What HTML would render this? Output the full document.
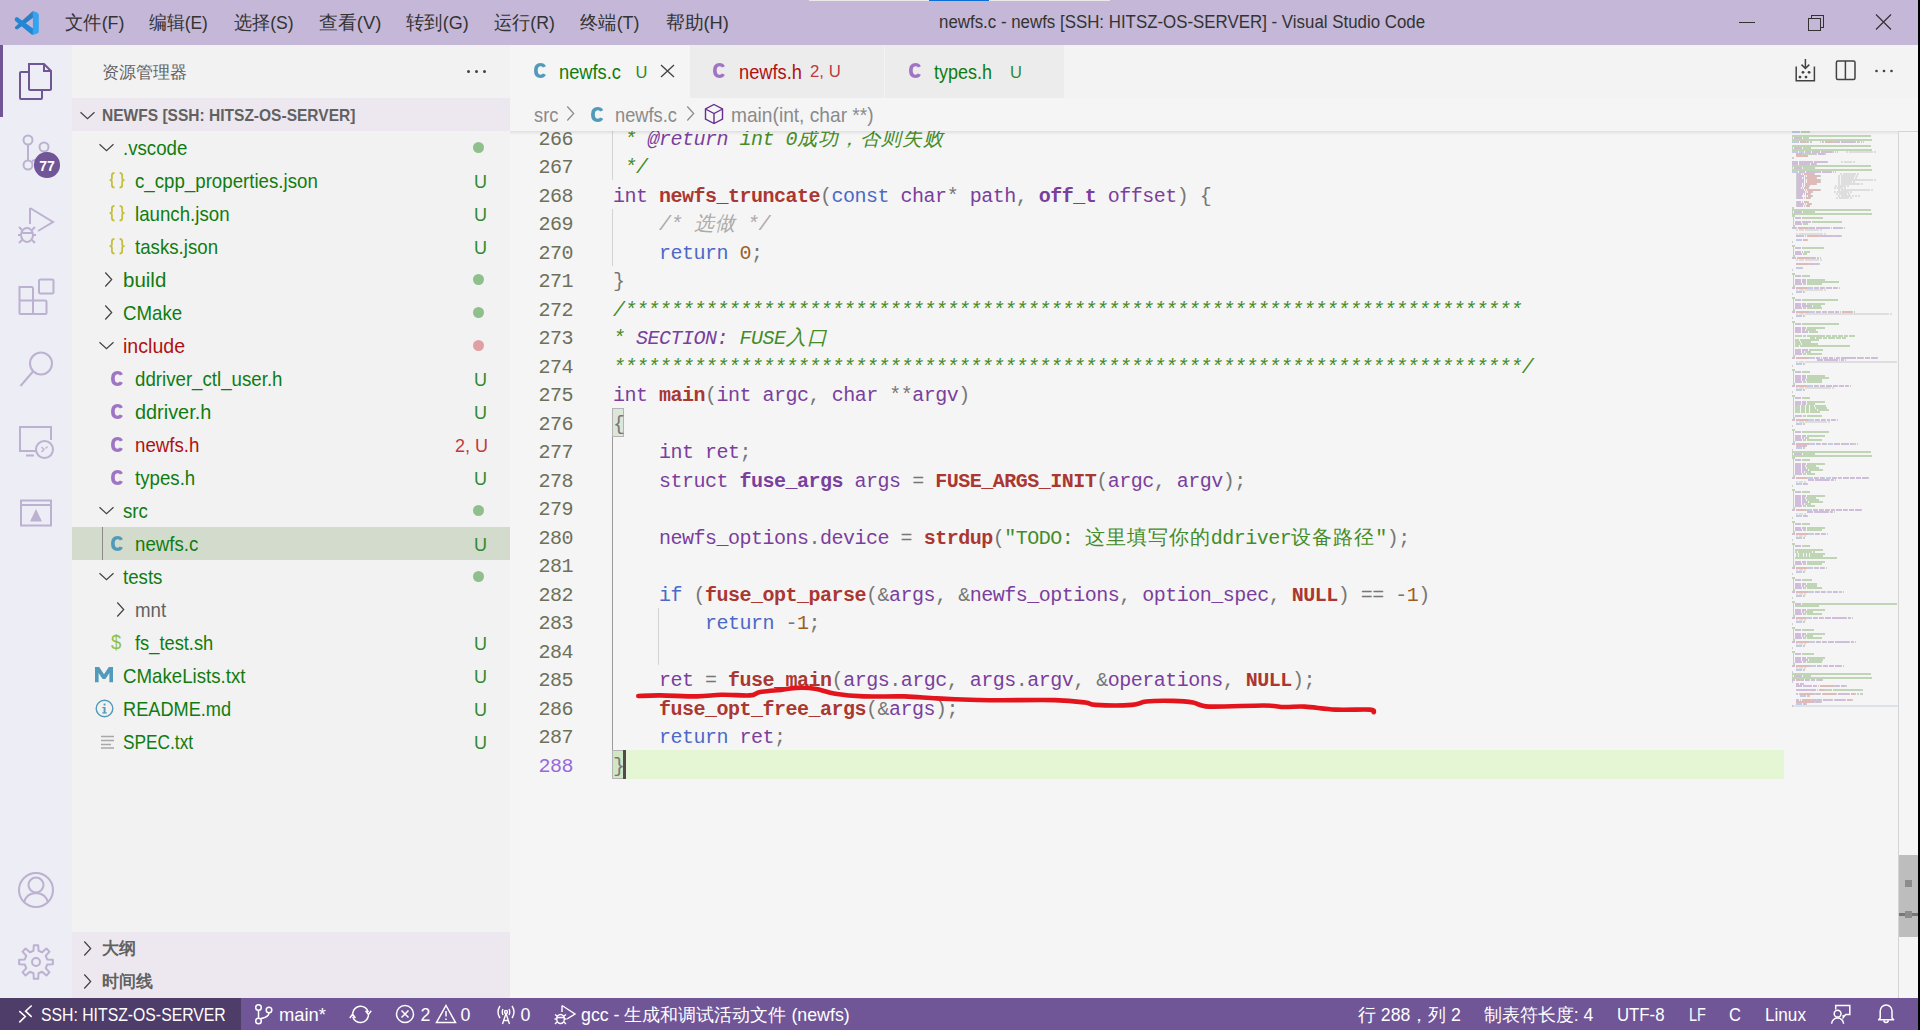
<!DOCTYPE html>
<html><head><meta charset="utf-8"><title>newfs.c - Visual Studio Code</title>
<style>
*{margin:0;padding:0;box-sizing:border-box}
html,body{width:1920px;height:1030px;overflow:hidden}
body{position:relative;font-family:"Liberation Sans",sans-serif;background:#f5f5f5;color:#333}
.a{position:absolute}
.t{position:absolute;white-space:pre;line-height:1}
.menu{top:13.5px;font-size:18.5px;color:#333}
.fn{position:absolute;white-space:pre;line-height:1;font-size:18.7px}
.g{color:#007100}.r{color:#b01011}.gr{color:#616161}
.ub{position:absolute;font-size:18px;line-height:1;white-space:pre}
.cl{position:absolute;left:613px;height:28.5px;white-space:pre;font-family:"Liberation Mono",monospace;font-size:20px;letter-spacing:-0.5px;line-height:28.5px;color:#777}
.cl span.z{letter-spacing:1px}
.ln{position:absolute;left:520px;width:53px;text-align:right;font-family:"Liberation Mono",monospace;font-size:20px;letter-spacing:-0.5px;line-height:28.5px;color:#6d705b;white-space:pre}
.kw{color:#4b69c6}.st{color:#7a3e9d}.fnc{color:#aa3731;font-weight:bold}.v{color:#7a3e9d}.tb{color:#7a3e9d;font-weight:bold}
.num{color:#9c5d27}.str{color:#448c27}.cm{color:#448c27;font-style:italic}.cmt{color:#7a3e9d;font-style:italic}.cg{color:#aaa;font-style:italic}.op{color:#777}
.sb{position:absolute;top:1006px;font-size:17.7px;line-height:1;color:#fff;white-space:pre}
</style></head><body>
<div class="a" style="left:0;top:0;width:1920px;height:45px;background:#c4b7d7"></div>
<svg class="a" style="left:0;top:0" width="45" height="45">
<polygon points="32.9,11.1 33,17.7 17.3,29.4 15.5,29.1 14.8,27.6 15.5,26.4" fill="#2c7fc3"/>
<polygon points="15.5,17.6 17.2,17.1 33,28.6 32.9,34.9 31.2,34.3 15,20.8 14.7,19.1" fill="#1f88d8"/>
<polygon points="32.9,11.1 37.2,12.6 38.8,14.4 38.8,32.2 37.2,33.6 32.9,34.9" fill="#34a4f1"/>
</svg>
<span class="t" style="left:64.7px;top:13.84px;font-size:18.5px;font-weight:normal;color:#333;transform:scaleX(0.9640);transform-origin:0 0;">文件(F)</span>
<span class="t" style="left:149.4px;top:13.84px;font-size:18.5px;font-weight:normal;color:#333;transform:scaleX(0.9382);transform-origin:0 0;">编辑(E)</span>
<span class="t" style="left:233.9px;top:13.84px;font-size:18.5px;font-weight:normal;color:#333;transform:scaleX(0.9510);transform-origin:0 0;">选择(S)</span>
<span class="t" style="left:318.6px;top:13.84px;font-size:18.5px;font-weight:normal;color:#333;transform:scaleX(0.9957);transform-origin:0 0;">查看(V)</span>
<span class="t" style="left:405.7px;top:13.84px;font-size:18.5px;font-weight:normal;color:#333;transform:scaleX(0.9703);transform-origin:0 0;">转到(G)</span>
<span class="t" style="left:494.4px;top:13.84px;font-size:18.5px;font-weight:normal;color:#333;transform:scaleX(0.9546);transform-origin:0 0;">运行(R)</span>
<span class="t" style="left:580.3px;top:13.84px;font-size:18.5px;font-weight:normal;color:#333;transform:scaleX(0.9640);transform-origin:0 0;">终端(T)</span>
<span class="t" style="left:666px;top:13.84px;font-size:18.5px;font-weight:normal;color:#333;transform:scaleX(0.9876);transform-origin:0 0;">帮助(H)</span>
<span class="t" style="left:939.4px;top:14.20px;font-size:17.6px;font-weight:normal;color:#333;transform:scaleX(0.9591);transform-origin:0 0;">newfs.c - newfs [SSH: HITSZ-OS-SERVER] - Visual Studio Code</span>
<div class="a" style="left:1739px;top:22px;width:16px;height:1px;background:#333"></div>
<div class="a" style="left:1811px;top:15px;width:13px;height:13px;border:1px solid #333"></div>
<div class="a" style="left:1808px;top:18px;width:13px;height:13px;border:1px solid #333;background:#c4b7d7"></div>
<svg class="a" style="left:1875px;top:14px" width="17" height="16"><path d="M1 0.5 L16 15.5 M16 0.5 L1 15.5" stroke="#333" stroke-width="1.2"/></svg>
<div class="a" style="left:809px;top:0;width:301px;height:1.2px;background:#e9e9e7"></div>
<div class="a" style="left:929px;top:0;width:60px;height:1.2px;background:#0a6fd6"></div>
<div class="a" style="left:0;top:45px;width:72px;height:953px;background:#ededf5"></div>
<div class="a" style="left:0;top:45px;width:3px;height:72px;background:#705697"></div>
<svg class="a" style="left:0;top:45px" width="72" height="953" viewBox="0 45 72 953" fill="none" stroke-width="2">
<!-- explorer -->
<path d="M29 64 H44 L51 71 V89 Q51 90 50 90 H30 Q29 90 29 89 Z" stroke="#705697"/>
<path d="M44 64 V71 H51" stroke="#705697"/>
<path d="M29 72 H21 Q20 72 20 73 V98 Q20 99 21 99 H41 Q42 99 42 98 V90" stroke="#705697"/>
<!-- scm -->
<circle cx="28" cy="140" r="4.5" stroke="#bcb1d0"/>
<circle cx="44" cy="147" r="4.5" stroke="#bcb1d0"/>
<circle cx="28" cy="165" r="4.5" stroke="#bcb1d0"/>
<path d="M28 144.5 V160.5 M44 151.5 Q44 158 32 161" stroke="#bcb1d0"/>
<!-- debug -->
<path d="M30 208 V224 M30 208 L53 222 L38 231" stroke="#bcb1d0"/>
<ellipse cx="27" cy="235" rx="6" ry="7" stroke="#bcb1d0"/>
<path d="M21 233 H33 M18 235 H21 M33 235 H36 M19 227 L22 230 M35 227 L32 230 M19 243 L22 240 M35 243 L32 240" stroke="#bcb1d0"/>
<!-- extensions -->
<rect x="39" y="279.5" width="14.5" height="14" rx="1.5" stroke="#bcb1d0"/>
<path d="M19.5 287 H31.5 Q33 287 33 288.5 V300.5 H45 Q46.5 300.5 46.5 302 V313 Q46.5 314 45.5 314 H20.5 Q19.5 314 19.5 313 Z M19.5 300.5 H33 V314" stroke="#bcb1d0"/>
<!-- search -->
<circle cx="41" cy="363.5" r="11" stroke="#bcb1d0"/>
<path d="M33 371.5 L20.5 386" stroke="#bcb1d0"/>
<!-- remote explorer -->
<path d="M36 451 H20 V427 H51 V440" stroke="#bcb1d0"/>
<path d="M26 455.5 H34" stroke="#bcb1d0"/>
<circle cx="44.5" cy="449.5" r="8.5" stroke="#bcb1d0"/>
<path d="M41.5 447 L44 449.5 L41.5 452 M47.5 446.5 L45.5 448.5" stroke="#bcb1d0" stroke-width="1.3"/>
<!-- azure-like -->
<rect x="21" y="500.5" width="30" height="25" stroke="#bcb1d0"/>
<path d="M21 505 H51" stroke="#bcb1d0"/>
<path d="M36 509 L30 521.5 H42 Z" fill="#bcb1d0" stroke="none"/>
<!-- account -->
<circle cx="36" cy="890" r="17" stroke="#bcb1d0"/>
<circle cx="36" cy="885" r="7.5" stroke="#bcb1d0"/>
<path d="M24 902.5 Q26 893.5 36 893 Q46 893.5 48 902.5" stroke="#bcb1d0"/>
</svg>
<svg class="a" style="left:0;top:0" width="72" height="1000" fill="none" stroke-width="2"><polygon points="47.22,959.49 52.86,959.80 52.86,964.20 47.22,964.51 45.71,968.16 49.48,972.36 46.36,975.48 42.16,971.71 38.51,973.22 38.20,978.86 33.80,978.86 33.49,973.22 29.84,971.71 25.64,975.48 22.52,972.36 26.29,968.16 24.78,964.51 19.14,964.20 19.14,959.80 24.78,959.49 26.29,955.84 22.52,951.64 25.64,948.52 29.84,952.29 33.49,950.78 33.80,945.14 38.20,945.14 38.51,950.78 42.16,952.29 46.36,948.52 49.48,951.64 45.71,955.84" stroke="#bcb1d0" stroke-linejoin="round"/><circle cx="36" cy="962" r="4" stroke="#bcb1d0"/></svg>
<div class="a" style="left:34.2px;top:152.3px;width:25.6px;height:25.6px;border-radius:50%;background:#705697"></div>
<span class="t" style="left:37px;top:159px;width:20px;text-align:center;font-size:14px;font-weight:bold;color:#fff">77</span>
<div class="a" style="left:72px;top:45px;width:438px;height:953px;background:#f2f2f2"></div>
<span class="t" style="left:102px;top:64.5px;font-size:16.6px;color:#616161">资源管理器</span>
<div class="a" style="left:467px;top:70px;width:3px;height:3px;border-radius:50%;background:#424242"></div>
<div class="a" style="left:475px;top:70px;width:3px;height:3px;border-radius:50%;background:#424242"></div>
<div class="a" style="left:483px;top:70px;width:3px;height:3px;border-radius:50%;background:#424242"></div>
<div class="a" style="left:72px;top:98px;width:438px;height:33px;background:#ede8ef"></div>
<svg class="a" style="left:79px;top:110px" width="18" height="12"><path d="M1.5 2.3 L8.5 8.7 L15.5 2.3" fill="none" stroke="#424242" stroke-width="1.2"/></svg>
<span class="t" style="left:102px;top:106.86px;font-size:17.3px;font-weight:bold;color:#616161;transform:scaleX(0.8988);transform-origin:0 0;">NEWFS [SSH: HITSZ-OS-SERVER]</span>
<div class="a" style="left:72px;top:527px;width:438px;height:33px;background:#d3dbcd"></div>
<div class="a" style="left:102px;top:527px;width:1px;height:33px;background:#8a8a8a"></div>
<svg class="a" style="left:98px;top:142px" width="18" height="12"><path d="M1.5 2.3 L8.5 8.7 L15.5 2.3" fill="none" stroke="#424242" stroke-width="1.2"/></svg>
<span class="t" style="left:122.9px;top:137.82px;font-size:20.3px;font-weight:normal;color:#107c10;transform:scaleX(0.9212);transform-origin:0 0;">.vscode</span>
<div class="a" style="left:473px;top:142px;width:11px;height:11px;border-radius:50%;background:#8fbf8c"></div>
<svg class="a" style="left:108.5px;top:172.3px" width="17" height="17" fill="none" stroke="#c6bf3c" stroke-width="1.8"><path d="M5.5 0.9 Q2.9 0.9 2.9 3.5 V6.6 Q2.9 8.15 0.6 8.15 Q2.9 8.15 2.9 9.7 V12.9 Q2.9 15.5 5.5 15.5 M10.6 0.9 Q13.2 0.9 13.2 3.5 V6.6 Q13.2 8.15 15.5 8.15 Q13.2 8.15 13.2 9.7 V12.9 Q13.2 15.5 10.6 15.5"/></svg>
<span class="t" style="left:134.6px;top:170.82px;font-size:20.3px;font-weight:normal;color:#107c10;transform:scaleX(0.9212);transform-origin:0 0;">c_cpp_properties.json</span>
<span class="ub" style="left:474px;top:173px;color:#2f8a2f">U</span>
<svg class="a" style="left:108.5px;top:205.3px" width="17" height="17" fill="none" stroke="#c6bf3c" stroke-width="1.8"><path d="M5.5 0.9 Q2.9 0.9 2.9 3.5 V6.6 Q2.9 8.15 0.6 8.15 Q2.9 8.15 2.9 9.7 V12.9 Q2.9 15.5 5.5 15.5 M10.6 0.9 Q13.2 0.9 13.2 3.5 V6.6 Q13.2 8.15 15.5 8.15 Q13.2 8.15 13.2 9.7 V12.9 Q13.2 15.5 10.6 15.5"/></svg>
<span class="t" style="left:134.6px;top:203.82px;font-size:20.3px;font-weight:normal;color:#107c10;transform:scaleX(0.9212);transform-origin:0 0;">launch.json</span>
<span class="ub" style="left:474px;top:206px;color:#2f8a2f">U</span>
<svg class="a" style="left:108.5px;top:238.3px" width="17" height="17" fill="none" stroke="#c6bf3c" stroke-width="1.8"><path d="M5.5 0.9 Q2.9 0.9 2.9 3.5 V6.6 Q2.9 8.15 0.6 8.15 Q2.9 8.15 2.9 9.7 V12.9 Q2.9 15.5 5.5 15.5 M10.6 0.9 Q13.2 0.9 13.2 3.5 V6.6 Q13.2 8.15 15.5 8.15 Q13.2 8.15 13.2 9.7 V12.9 Q13.2 15.5 10.6 15.5"/></svg>
<span class="t" style="left:134.6px;top:236.82px;font-size:20.3px;font-weight:normal;color:#107c10;transform:scaleX(0.9212);transform-origin:0 0;">tasks.json</span>
<span class="ub" style="left:474px;top:239px;color:#2f8a2f">U</span>
<svg class="a" style="left:103px;top:271px" width="12" height="18"><path d="M2.3 1.5 L8.7 8.5 L2.3 15.5" fill="none" stroke="#424242" stroke-width="1.2"/></svg>
<span class="t" style="left:122.9px;top:269.82px;font-size:20.3px;font-weight:normal;color:#107c10;transform:scaleX(1.0099);transform-origin:0 0;">build</span>
<div class="a" style="left:473px;top:274px;width:11px;height:11px;border-radius:50%;background:#8fbf8c"></div>
<svg class="a" style="left:103px;top:304px" width="12" height="18"><path d="M2.3 1.5 L8.7 8.5 L2.3 15.5" fill="none" stroke="#424242" stroke-width="1.2"/></svg>
<span class="t" style="left:122.9px;top:302.82px;font-size:20.3px;font-weight:normal;color:#107c10;transform:scaleX(0.9212);transform-origin:0 0;">CMake</span>
<div class="a" style="left:473px;top:307px;width:11px;height:11px;border-radius:50%;background:#8fbf8c"></div>
<svg class="a" style="left:98px;top:340px" width="18" height="12"><path d="M1.5 2.3 L8.5 8.7 L15.5 2.3" fill="none" stroke="#424242" stroke-width="1.2"/></svg>
<span class="t" style="left:122.9px;top:335.82px;font-size:20.3px;font-weight:normal;color:#b01011;transform:scaleX(0.9655);transform-origin:0 0;">include</span>
<div class="a" style="left:473px;top:340px;width:11px;height:11px;border-radius:50%;background:#e0a0a3"></div>
<svg class="a" style="left:110.8px;top:371px;transform:scale(1,1);transform-origin:0 0" width="13" height="16"><path d="M11.9 3.2 Q10.2 0 6.6 0 Q0 0 0 7.5 Q0 15 6.6 15 Q10.2 15 11.9 11.8 L8.9 10.6 Q8.2 11.7 6.8 11.7 Q3.7 11.7 3.7 7.5 Q3.7 3.3 6.8 3.3 Q8.2 3.3 8.9 4.4 Z" fill="#a074c4"/></svg>
<span class="t" style="left:134.6px;top:368.82px;font-size:20.3px;font-weight:normal;color:#107c10;transform:scaleX(0.9212);transform-origin:0 0;">ddriver_ctl_user.h</span>
<span class="ub" style="left:474px;top:371px;color:#2f8a2f">U</span>
<svg class="a" style="left:110.8px;top:404px;transform:scale(1,1);transform-origin:0 0" width="13" height="16"><path d="M11.9 3.2 Q10.2 0 6.6 0 Q0 0 0 7.5 Q0 15 6.6 15 Q10.2 15 11.9 11.8 L8.9 10.6 Q8.2 11.7 6.8 11.7 Q3.7 11.7 3.7 7.5 Q3.7 3.3 6.8 3.3 Q8.2 3.3 8.9 4.4 Z" fill="#a074c4"/></svg>
<span class="t" style="left:134.6px;top:401.82px;font-size:20.3px;font-weight:normal;color:#107c10;transform:scaleX(0.9803);transform-origin:0 0;">ddriver.h</span>
<span class="ub" style="left:474px;top:404px;color:#2f8a2f">U</span>
<svg class="a" style="left:110.8px;top:437px;transform:scale(1,1);transform-origin:0 0" width="13" height="16"><path d="M11.9 3.2 Q10.2 0 6.6 0 Q0 0 0 7.5 Q0 15 6.6 15 Q10.2 15 11.9 11.8 L8.9 10.6 Q8.2 11.7 6.8 11.7 Q3.7 11.7 3.7 7.5 Q3.7 3.3 6.8 3.3 Q8.2 3.3 8.9 4.4 Z" fill="#a074c4"/></svg>
<span class="t" style="left:134.6px;top:434.82px;font-size:20.3px;font-weight:normal;color:#b01011;transform:scaleX(0.9212);transform-origin:0 0;">newfs.h</span>
<span class="ub" style="left:455px;top:437px;color:#c0393f">2, U</span>
<svg class="a" style="left:110.8px;top:470px;transform:scale(1,1);transform-origin:0 0" width="13" height="16"><path d="M11.9 3.2 Q10.2 0 6.6 0 Q0 0 0 7.5 Q0 15 6.6 15 Q10.2 15 11.9 11.8 L8.9 10.6 Q8.2 11.7 6.8 11.7 Q3.7 11.7 3.7 7.5 Q3.7 3.3 6.8 3.3 Q8.2 3.3 8.9 4.4 Z" fill="#a074c4"/></svg>
<span class="t" style="left:134.6px;top:467.82px;font-size:20.3px;font-weight:normal;color:#107c10;transform:scaleX(0.9212);transform-origin:0 0;">types.h</span>
<span class="ub" style="left:474px;top:470px;color:#2f8a2f">U</span>
<svg class="a" style="left:98px;top:505px" width="18" height="12"><path d="M1.5 2.3 L8.5 8.7 L15.5 2.3" fill="none" stroke="#424242" stroke-width="1.2"/></svg>
<span class="t" style="left:122.9px;top:500.82px;font-size:20.3px;font-weight:normal;color:#107c10;transform:scaleX(0.9212);transform-origin:0 0;">src</span>
<div class="a" style="left:473px;top:505px;width:11px;height:11px;border-radius:50%;background:#8fbf8c"></div>
<svg class="a" style="left:110.8px;top:536px;transform:scale(1,1);transform-origin:0 0" width="13" height="16"><path d="M11.9 3.2 Q10.2 0 6.6 0 Q0 0 0 7.5 Q0 15 6.6 15 Q10.2 15 11.9 11.8 L8.9 10.6 Q8.2 11.7 6.8 11.7 Q3.7 11.7 3.7 7.5 Q3.7 3.3 6.8 3.3 Q8.2 3.3 8.9 4.4 Z" fill="#519aba"/></svg>
<span class="t" style="left:134.6px;top:533.82px;font-size:20.3px;font-weight:normal;color:#107c10;transform:scaleX(0.9212);transform-origin:0 0;">newfs.c</span>
<span class="ub" style="left:474px;top:536px;color:#2f8a2f">U</span>
<svg class="a" style="left:98px;top:571px" width="18" height="12"><path d="M1.5 2.3 L8.5 8.7 L15.5 2.3" fill="none" stroke="#424242" stroke-width="1.2"/></svg>
<span class="t" style="left:122.9px;top:566.82px;font-size:20.3px;font-weight:normal;color:#107c10;transform:scaleX(0.9212);transform-origin:0 0;">tests</span>
<div class="a" style="left:473px;top:571px;width:11px;height:11px;border-radius:50%;background:#8fbf8c"></div>
<svg class="a" style="left:115px;top:601px" width="12" height="18"><path d="M2.3 1.5 L8.7 8.5 L2.3 15.5" fill="none" stroke="#424242" stroke-width="1.2"/></svg>
<span class="t" style="left:134.6px;top:599.82px;font-size:20.3px;font-weight:normal;color:#616161;transform:scaleX(0.9212);transform-origin:0 0;">mnt</span>
<span class="t" style="left:111.2px;top:633.49px;font-size:19.5px;font-weight:normal;color:#8dc149;transform:scaleX(0.9487);transform-origin:0 0;">$</span>
<span class="t" style="left:134.6px;top:632.82px;font-size:20.3px;font-weight:normal;color:#107c10;transform:scaleX(0.9015);transform-origin:0 0;">fs_test.sh</span>
<span class="ub" style="left:474px;top:635px;color:#2f8a2f">U</span>
<svg class="a" style="left:95.3px;top:667.3px" width="19" height="16"><path d="M0 15.3 V0 H4.2 L9 7.2 L13.8 0 H18 V15.3 H14.4 V6 L10.4 12 H7.6 L3.6 6 V15.3 Z" fill="#519aba"/></svg>
<span class="t" style="left:122.9px;top:665.82px;font-size:20.3px;font-weight:normal;color:#107c10;transform:scaleX(0.9212);transform-origin:0 0;">CMakeLists.txt</span>
<span class="ub" style="left:474px;top:668px;color:#2f8a2f">U</span>
<svg class="a" style="left:95px;top:699px" width="19" height="19"><circle cx="9.5" cy="9.5" r="8.3" fill="none" stroke="#519aba" stroke-width="1.4"/><rect x="8.6" y="8" width="1.9" height="6.2" fill="#519aba"/><rect x="8.6" y="4.6" width="1.9" height="1.9" fill="#519aba"/><rect x="7.3" y="13.3" width="4.5" height="1.2" fill="#519aba"/><rect x="7.3" y="8" width="2" height="1.1" fill="#519aba"/></svg>
<span class="t" style="left:122.9px;top:698.82px;font-size:20.3px;font-weight:normal;color:#107c10;transform:scaleX(0.8966);transform-origin:0 0;">README.md</span>
<span class="ub" style="left:474px;top:701px;color:#2f8a2f">U</span>
<svg class="a" style="left:100px;top:735px" width="15" height="14"><path d="M1 1.5 H14 M1 5.5 H14 M1 9.5 H11 M1 13 H14" stroke="#a8a8a8" stroke-width="1.6"/></svg>
<span class="t" style="left:122.9px;top:731.82px;font-size:20.3px;font-weight:normal;color:#107c10;transform:scaleX(0.8522);transform-origin:0 0;">SPEC.txt</span>
<span class="ub" style="left:474px;top:734px;color:#2f8a2f">U</span>
<div class="a" style="left:72px;top:932px;width:438px;height:66px;background:#ede8ef"></div>
<svg class="a" style="left:82px;top:940px" width="12" height="18"><path d="M2.3 1.5 L8.7 8.5 L2.3 15.5" fill="none" stroke="#424242" stroke-width="1.2"/></svg>
<svg class="a" style="left:82px;top:973px" width="12" height="18"><path d="M2.3 1.5 L8.7 8.5 L2.3 15.5" fill="none" stroke="#424242" stroke-width="1.2"/></svg>
<span class="t" style="left:102px;top:940px;font-size:16.5px;font-weight:bold;color:#616161">大纲</span>
<span class="t" style="left:102px;top:973px;font-size:16.5px;font-weight:bold;color:#616161">时间线</span>
<div class="a" style="left:510px;top:45px;width:1410px;height:53px;background:#f3f3f3"></div>
<div class="a" style="left:510px;top:45px;width:180px;height:53px;background:#f5f5f5"></div>
<div class="a" style="left:690px;top:45px;width:194px;height:53px;background:#ececec"></div>
<div class="a" style="left:884px;top:45px;width:180px;height:53px;background:#ececec;border-left:1px solid #f3f3f3"></div>
<svg class="a" style="left:533.75px;top:63px;transform:scale(1,1);transform-origin:0 0" width="13" height="16"><path d="M11.9 3.2 Q10.2 0 6.6 0 Q0 0 0 7.5 Q0 15 6.6 15 Q10.2 15 11.9 11.8 L8.9 10.6 Q8.2 11.7 6.8 11.7 Q3.7 11.7 3.7 7.5 Q3.7 3.3 6.8 3.3 Q8.2 3.3 8.9 4.4 Z" fill="#519aba"/></svg>
<span class="t" style="left:559px;top:61.57px;font-size:20.3px;font-weight:normal;color:#107c10;transform:scaleX(0.9015);transform-origin:0 0;">newfs.c</span>
<span class="t" style="left:635.6px;top:64.03px;font-size:16.5px;font-weight:normal;color:#2f8a2f;transform:scaleX(1.0000);transform-origin:0 0;">U</span>
<svg class="a" style="left:660px;top:64px" width="15" height="14"><path d="M1 1 L14 13 M14 1 L1 13" stroke="#424242" stroke-width="1.3"/></svg>
<svg class="a" style="left:713px;top:63px;transform:scale(1,1);transform-origin:0 0" width="13" height="16"><path d="M11.9 3.2 Q10.2 0 6.6 0 Q0 0 0 7.5 Q0 15 6.6 15 Q10.2 15 11.9 11.8 L8.9 10.6 Q8.2 11.7 6.8 11.7 Q3.7 11.7 3.7 7.5 Q3.7 3.3 6.8 3.3 Q8.2 3.3 8.9 4.4 Z" fill="#a074c4"/></svg>
<span class="t" style="left:738.7px;top:61.57px;font-size:20.3px;font-weight:normal;color:#b01011;transform:scaleX(0.9015);transform-origin:0 0;">newfs.h</span>
<span class="t" style="left:810px;top:63.78px;font-size:16.8px;font-weight:normal;color:#c0393f;transform:scaleX(1.0000);transform-origin:0 0;">2, U</span>
<svg class="a" style="left:908.5px;top:63px;transform:scale(1,1);transform-origin:0 0" width="13" height="16"><path d="M11.9 3.2 Q10.2 0 6.6 0 Q0 0 0 7.5 Q0 15 6.6 15 Q10.2 15 11.9 11.8 L8.9 10.6 Q8.2 11.7 6.8 11.7 Q3.7 11.7 3.7 7.5 Q3.7 3.3 6.8 3.3 Q8.2 3.3 8.9 4.4 Z" fill="#a074c4"/></svg>
<span class="t" style="left:933.6px;top:61.57px;font-size:20.3px;font-weight:normal;color:#107c10;transform:scaleX(0.8867);transform-origin:0 0;">types.h</span>
<span class="t" style="left:1010px;top:64.03px;font-size:16.5px;font-weight:normal;color:#2f8a2f;transform:scaleX(1.0000);transform-origin:0 0;">U</span>
<svg class="a" style="left:1790px;top:55px" width="110" height="32" fill="none" stroke="#424242" stroke-width="1.5">
<path d="M6.2 11.6 V25.8 H24.4 V11.6"/><path d="M15.4 4.1 V13.3 M11.5 9.6 L15.4 13.5 L19.3 9.6"/>
<circle cx="13" cy="17.3" r="1.4" fill="#424242" stroke="none"/><circle cx="19.1" cy="17.3" r="1.4" fill="#424242" stroke="none"/><circle cx="10" cy="22.1" r="1.4" fill="#424242" stroke="none"/><circle cx="16" cy="22.1" r="1.4" fill="#424242" stroke="none"/>
<rect x="46.4" y="6" width="18.6" height="18.6" rx="1.5"/><path d="M55.4 6 V24.6"/>
<circle cx="86.5" cy="16" r="1.3" fill="#424242" stroke="none"/><circle cx="94" cy="16" r="1.3" fill="#424242" stroke="none"/><circle cx="101.5" cy="16" r="1.3" fill="#424242" stroke="none"/>
</svg>
<div class="a" style="left:613px;top:750px;width:1171px;height:28.5px;background:#e4f6d4"></div>
<div class="a" style="left:612.0px;top:123.0px;width:1px;height:57.0px;background:#d3d3d3"></div>
<div class="a" style="left:612.0px;top:208.5px;width:1px;height:57.0px;background:#d3d3d3"></div>
<div class="a" style="left:612.0px;top:436.5px;width:1px;height:313.5px;background:#9a9a9a"></div>
<div class="a" style="left:658.0px;top:607.5px;width:1px;height:57.0px;background:#d3d3d3"></div>
<div class="a" style="left:612px;top:408.0px;width:12px;height:28.5px;background:#dee6da;border:1px solid #b4b4b4"></div>
<div class="a" style="left:612px;top:750.0px;width:12px;height:28.5px;background:#d0e7c6;border:1px solid #b4b4b4"></div>
<div class="ln" style="top:125.5px">266</div>
<div class="cl" style="top:125.5px"><span class="cm"> * </span><span class="cmt">@return</span><span class="cm"> int 0</span><span class="cm z">成功，否则失败</span></div>
<div class="ln" style="top:154.0px">267</div>
<div class="cl" style="top:154.0px"><span class="cm"> */</span></div>
<div class="ln" style="top:182.5px">268</div>
<div class="cl" style="top:182.5px"><span class="st">int</span> <span class="fnc">newfs_truncate</span><span class="op">(</span><span class="kw">const</span> <span class="st">char</span><span class="op">*</span> <span class="v">path</span><span class="op">,</span> <span class="tb">off_t</span> <span class="v">offset</span><span class="op">) {</span></div>
<div class="ln" style="top:211.0px">269</div>
<div class="cl" style="top:211.0px">    <span class="cg">/* </span><span class="cg z">选做</span><span class="cg"> */</span></div>
<div class="ln" style="top:239.5px">270</div>
<div class="cl" style="top:239.5px">    <span class="kw">return</span> <span class="num">0</span><span class="op">;</span></div>
<div class="ln" style="top:268.0px">271</div>
<div class="cl" style="top:268.0px"><span class="op">}</span></div>
<div class="ln" style="top:296.5px">272</div>
<div class="cl" style="top:296.5px"><span class="cm">/******************************************************************************</span></div>
<div class="ln" style="top:325.0px">273</div>
<div class="cl" style="top:325.0px"><span class="cm">* </span><span class="cmt">SECTION:</span><span class="cm"> FUSE</span><span class="cm z">入口</span></div>
<div class="ln" style="top:353.5px">274</div>
<div class="cl" style="top:353.5px"><span class="cm">*******************************************************************************/</span></div>
<div class="ln" style="top:382.0px">275</div>
<div class="cl" style="top:382.0px"><span class="st">int</span> <span class="fnc">main</span><span class="op">(</span><span class="st">int</span> <span class="v">argc</span><span class="op">,</span> <span class="st">char</span> <span class="op">**</span><span class="v">argv</span><span class="op">)</span></div>
<div class="ln" style="top:410.5px">276</div>
<div class="cl" style="top:410.5px"><span class="op">{</span></div>
<div class="ln" style="top:439.0px">277</div>
<div class="cl" style="top:439.0px">    <span class="st">int</span> <span class="v">ret</span><span class="op">;</span></div>
<div class="ln" style="top:467.5px">278</div>
<div class="cl" style="top:467.5px">    <span class="st">struct</span> <span class="tb">fuse_args</span> <span class="v">args</span> <span class="op">=</span> <span class="fnc">FUSE_ARGS_INIT</span><span class="op">(</span><span class="v">argc</span><span class="op">,</span> <span class="v">argv</span><span class="op">);</span></div>
<div class="ln" style="top:496.0px">279</div>
<div class="cl" style="top:496.0px"></div>
<div class="ln" style="top:524.5px">280</div>
<div class="cl" style="top:524.5px">    <span class="v">newfs_options</span><span class="op">.</span><span class="v">device</span> <span class="op">=</span> <span class="fnc">strdup</span><span class="op">(</span><span class="str">&quot;TODO: </span><span class="str z">这里填写你的</span><span class="str">ddriver</span><span class="str z">设备路径</span><span class="str">&quot;</span><span class="op">);</span></div>
<div class="ln" style="top:553.0px">281</div>
<div class="cl" style="top:553.0px"></div>
<div class="ln" style="top:581.5px">282</div>
<div class="cl" style="top:581.5px">    <span class="kw">if</span> <span class="op">(</span><span class="fnc">fuse_opt_parse</span><span class="op">(&amp;</span><span class="v">args</span><span class="op">,</span> <span class="op">&amp;</span><span class="v">newfs_options</span><span class="op">,</span> <span class="v">option_spec</span><span class="op">,</span> <span class="fnc">NULL</span><span class="op">) == -</span><span class="num">1</span><span class="op">)</span></div>
<div class="ln" style="top:610.0px">283</div>
<div class="cl" style="top:610.0px">        <span class="kw">return</span> <span class="op">-</span><span class="num">1</span><span class="op">;</span></div>
<div class="ln" style="top:638.5px">284</div>
<div class="cl" style="top:638.5px"></div>
<div class="ln" style="top:667.0px">285</div>
<div class="cl" style="top:667.0px">    <span class="v">ret</span> <span class="op">=</span> <span class="fnc">fuse_main</span><span class="op">(</span><span class="v">args</span><span class="op">.</span><span class="v">argc</span><span class="op">,</span> <span class="v">args</span><span class="op">.</span><span class="v">argv</span><span class="op">,</span> <span class="op">&amp;</span><span class="v">operations</span><span class="op">,</span> <span class="fnc">NULL</span><span class="op">);</span></div>
<div class="ln" style="top:695.5px">286</div>
<div class="cl" style="top:695.5px">    <span class="fnc">fuse_opt_free_args</span><span class="op">(&amp;</span><span class="v">args</span><span class="op">);</span></div>
<div class="ln" style="top:724.0px">287</div>
<div class="cl" style="top:724.0px">    <span class="kw">return</span> <span class="v">ret</span><span class="op">;</span></div>
<div class="ln" style="top:752.5px;color:#9769dc">288</div>
<div class="cl" style="top:752.5px"><span class="op">}</span></div>
<div class="a" style="left:623px;top:750px;width:3px;height:28.5px;background:#54494b"></div>
<div class="a" style="left:510px;top:98px;width:1410px;height:33px;background:#f5f5f5"></div>
<span class="t" style="left:534.3px;top:104.62px;font-size:20.3px;font-weight:normal;color:#8a8a8a;transform:scaleX(0.9015);transform-origin:0 0;">src</span>
<svg class="a" style="left:565px;top:105px" width="12" height="18"><path d="M2.3 1.5 L8.7 8.5 L2.3 15.5" fill="none" stroke="#8a8a8a" stroke-width="1.2"/></svg>
<svg class="a" style="left:590.8px;top:106.9px;transform:scale(1.03,1);transform-origin:0 0" width="13" height="16"><path d="M11.9 3.2 Q10.2 0 6.6 0 Q0 0 0 7.5 Q0 15 6.6 15 Q10.2 15 11.9 11.8 L8.9 10.6 Q8.2 11.7 6.8 11.7 Q3.7 11.7 3.7 7.5 Q3.7 3.3 6.8 3.3 Q8.2 3.3 8.9 4.4 Z" fill="#519aba"/></svg>
<span class="t" style="left:615.3px;top:104.62px;font-size:20.3px;font-weight:normal;color:#8a8a8a;transform:scaleX(0.9015);transform-origin:0 0;">newfs.c</span>
<svg class="a" style="left:685px;top:105px" width="12" height="18"><path d="M2.3 1.5 L8.7 8.5 L2.3 15.5" fill="none" stroke="#8a8a8a" stroke-width="1.2"/></svg>
<svg class="a" style="left:704px;top:103px" width="20" height="22" fill="none" stroke="#652d90" stroke-width="1.4"><path d="M10 1.5 L18.5 6 V16 L10 20.5 L1.5 16 V6 Z M1.5 6 L10 10.5 L18.5 6 M10 10.5 V20.5"/></svg>
<span class="t" style="left:731.4px;top:104.62px;font-size:20.3px;font-weight:normal;color:#8a8a8a;transform:scaleX(0.9443);transform-origin:0 0;">main(int, char **)</span>
<div class="a" style="left:510px;top:131px;width:1388px;height:4px;background:linear-gradient(rgba(0,0,0,0.09),rgba(0,0,0,0))"></div>
<svg class="a" style="left:0;top:0;z-index:5" width="1920" height="1030"><path d="M638.3 696.0 C642.0 695.9 650.8 695.3 660.6 695.4 C670.4 695.5 687.0 696.5 697.2 696.4 C707.4 696.3 712.8 695.0 721.6 694.8 C730.4 694.6 743.6 695.9 750.0 695.4 C756.4 694.9 754.8 693.0 760.2 692.0 C765.6 691.0 776.4 690.4 782.5 689.7 C788.6 689.0 791.3 688.1 796.7 687.9 C802.1 687.7 808.6 687.7 815.0 688.7 C821.4 689.7 827.2 692.5 835.3 693.8 C843.4 695.1 852.3 696.0 863.8 696.4 C875.3 696.8 892.2 696.1 904.4 696.4 C916.6 696.7 924.7 697.8 936.9 698.4 C949.1 699.0 967.0 699.7 977.5 700.0 C988.0 700.3 987.1 700.3 1000.0 700.3 C1012.9 700.3 1040.6 699.7 1054.8 700.1 C1069.0 700.5 1078.5 701.7 1085.3 702.5 C1092.1 703.3 1087.7 704.5 1095.5 704.9 C1103.3 705.3 1123.5 705.5 1132.0 704.9 C1140.5 704.3 1139.4 702.2 1146.2 701.5 C1153.0 700.8 1164.9 700.7 1172.7 700.9 C1180.5 701.1 1186.9 701.5 1193.0 702.5 C1199.1 703.5 1197.4 706.1 1209.2 706.6 C1221.0 707.1 1251.5 705.4 1264.0 705.5 C1276.5 705.6 1277.6 706.8 1284.4 707.0 C1291.2 707.2 1296.2 706.2 1304.7 706.6 C1313.2 707.0 1324.4 709.1 1335.2 709.6 C1346.0 710.1 1363.3 709.2 1369.7 709.6 C1376.1 710.0 1373.1 711.8 1373.8 712.2" fill="none" stroke="#e3141c" stroke-width="4.6" stroke-linecap="round" stroke-linejoin="round"/></svg>
<div class="a" style="left:1898px;top:131px;width:1px;height:867px;background:#d4d4d4"></div>
<div class="a" style="left:1898px;top:131px;width:20px;height:1px;background:#d4d4d4"></div>
<div class="a" style="left:1899px;top:855px;width:19px;height:82px;background:#bdbdbd"></div>
<div class="a" style="left:1905px;top:880px;width:7px;height:7px;background:#8c8c8c"></div>
<div class="a" style="left:1899px;top:913px;width:19px;height:3px;background:#777"></div>
<div class="a" style="left:1905px;top:911px;width:7px;height:7px;background:#8c8c8c"></div>
<svg class="a" style="left:0;top:0" width="1920" height="1030"><rect x="1792" y="705" width="106" height="2" fill="#dce2ea"/><path d="M1792 132h8M1792 142h7" stroke="#4b69c6" stroke-width="1.1" opacity="0.6"/><path d="M1801 132h9M1803 154h13M1826 690h6M1833 690h28" stroke="#448c27" stroke-width="1.1" opacity="0.6"/><path d="M1792 136h79M1792 138h1M1803 138h6M1792 140h80M1792 146h79M1792 148h1M1803 148h8M1792 150h80M1792 166h79M1792 168h1M1803 168h12M1792 170h80M1792 210h79M1792 212h1M1803 212h12M1792 214h80M1792 216h3M1793 218h1M1802 218h21M1793 220h1M1793 222h1M1812 222h30M1793 224h1M1803 224h5M1793 226h2M1792 246h3M1793 248h1M1802 248h22M1793 250h1M1793 252h1M1804 252h6M1793 254h1M1803 254h4M1793 256h2M1792 274h3M1793 276h1M1802 276h8M1793 278h1M1793 280h1M1807 280h18M1793 282h1M1807 282h32M1793 284h1M1803 284h3M1807 284h15M1793 286h2M1792 298h3M1793 300h1M1802 300h36M1793 302h1M1793 304h1M1807 304h18M1793 306h1M1813 306h8M1793 308h1M1803 308h3M1807 308h15M1793 310h2M1792 322h3M1793 324h1M1802 324h37M1793 326h1M1793 328h1M1807 328h18M1793 330h1M1806 330h10M1793 332h1M1809 332h9M1793 334h1M1793 336h1M1795 336h7M1803 336h3M1807 336h18M1826 336h5M1832 336h5M1838 336h5M1844 336h4M1849 336h6M1793 338h1M1810 338h5M1816 338h6M1823 338h4M1828 338h7M1836 338h5M1842 338h4M1793 340h1M1795 340h4M1800 340h19M1793 342h1M1795 342h5M1801 342h10M1793 344h1M1795 344h6M1802 344h16M1793 346h1M1795 346h4M1800 346h50M1793 348h1M1793 350h1M1809 350h14M1793 352h1M1805 352h6M1793 354h1M1803 354h3M1807 354h15M1793 356h2M1792 370h3M1793 372h1M1802 372h8M1793 374h1M1793 376h1M1807 376h18M1793 378h1M1807 378h22M1793 380h1M1806 380h16M1793 382h1M1803 382h3M1807 382h15M1793 384h2M1792 396h3M1793 398h1M1802 398h8M1793 400h1M1793 402h1M1807 402h18M1793 404h1M1807 404h8M1793 406h1M1795 406h5M1801 406h4M1806 406h3M1810 406h4M1815 406h11M1793 408h1M1795 408h5M1801 408h4M1806 408h3M1810 408h5M1816 408h11M1793 410h1M1795 410h5M1801 410h4M1806 410h3M1810 410h7M1818 410h11M1793 412h1M1795 412h5M1801 412h4M1806 412h3M1810 412h10M1793 414h1M1793 416h1M1803 416h3M1807 416h15M1793 418h2M1792 430h3M1793 432h1M1802 432h27M1793 434h1M1793 436h1M1807 436h18M1793 438h1M1805 438h4M1793 440h1M1803 440h3M1807 440h15M1793 442h2M1792 452h79M1792 454h1M1803 454h12M1792 456h80M1792 458h3M1793 460h1M1802 460h8M1793 462h1M1793 464h1M1807 464h18M1793 466h1M1806 466h10M1793 468h1M1807 468h12M1793 470h1M1809 470h14M1793 472h1M1805 472h6M1793 474h1M1803 474h3M1807 474h8M1793 476h2M1792 490h3M1793 492h1M1802 492h8M1793 494h1M1793 496h1M1807 496h18M1793 498h1M1806 498h10M1793 500h1M1807 500h12M1793 502h1M1809 502h14M1793 504h1M1805 504h6M1793 506h1M1803 506h3M1807 506h8M1793 508h2M1792 522h3M1793 524h1M1802 524h8M1793 526h1M1793 528h1M1807 528h18M1793 530h1M1803 530h3M1807 530h15M1793 532h2M1792 544h3M1793 546h1M1802 546h8M1793 548h1M1793 550h1M1795 550h28M1793 552h1M1795 552h2M1798 552h14M1813 552h2M1793 554h1M1796 554h2M1799 554h4M1804 554h2M1807 554h2M1810 554h15M1793 556h1M1796 556h2M1799 556h4M1804 556h2M1807 556h2M1810 556h13M1793 558h1M1795 558h42M1793 560h1M1793 562h1M1807 562h18M1793 564h1M1803 564h3M1807 564h15M1793 566h2M1792 578h3M1793 580h1M1802 580h10M1793 582h1M1793 584h1M1807 584h10M1793 586h1M1805 586h12M1793 588h1M1803 588h3M1807 588h15M1793 590h2M1792 602h3M1793 604h1M1802 604h95M1793 606h1M1795 606h24M1793 608h1M1793 610h1M1807 610h18M1793 612h1M1805 612h8M1793 614h1M1803 614h3M1807 614h15M1793 616h2M1792 628h3M1793 630h1M1802 630h12M1793 632h1M1793 634h1M1807 634h18M1793 636h1M1805 636h8M1793 638h1M1803 638h3M1807 638h15M1793 640h2M1792 652h3M1793 654h1M1802 654h12M1793 656h1M1793 658h1M1807 658h18M1793 660h1M1809 660h14M1793 662h1M1803 662h3M1807 662h15M1793 664h2M1792 674h79M1792 676h1M1803 676h8M1792 678h80" stroke="#448c27" stroke-width="1.1" opacity="0.6"/><path d="M1794 138h8M1834 142h6M1794 148h8M1805 152h6M1792 162h6M1792 164h6M1794 168h8M1799 172h6M1794 212h8M1795 218h6M1795 222h6M1802 222h9M1795 224h7M1792 228h4M1809 228h6M1795 248h6M1795 252h6M1802 252h1M1795 254h7M1792 258h4M1811 258h4M1795 276h6M1795 280h6M1802 280h4M1795 282h6M1802 282h4M1795 284h7M1792 288h3M1814 288h4M1826 288h6M1795 300h6M1795 304h6M1802 304h4M1795 306h6M1802 306h10M1795 308h7M1792 312h3M1816 312h4M1828 312h6M1795 324h6M1795 328h6M1802 328h4M1795 330h6M1802 330h3M1795 332h6M1802 332h6M1795 350h6M1802 350h6M1795 352h6M1802 352h2M1795 354h7M1792 358h3M1816 358h4M1829 358h4M1841 358h15M1865 358h5M1817 360h6M1795 372h6M1795 376h6M1802 376h4M1795 378h6M1802 378h4M1795 380h6M1802 380h3M1795 382h7M1792 386h3M1814 386h4M1826 386h6M1839 386h5M1795 398h6M1795 402h6M1802 402h4M1795 404h6M1802 404h4M1795 416h7M1792 420h3M1815 420h4M1827 420h3M1795 432h6M1795 436h6M1802 436h4M1795 438h6M1802 438h2M1795 440h7M1792 444h3M1816 444h4M1834 444h6M1797 446h4M1794 454h8M1795 460h6M1795 464h6M1802 464h4M1795 466h6M1802 466h3M1795 468h6M1802 468h4M1795 470h6M1802 470h6M1795 472h6M1802 472h2M1795 474h7M1792 478h3M1814 478h4M1832 478h4M1843 478h6M1856 478h5M1808 480h6M1795 492h6M1795 496h6M1802 496h4M1795 498h6M1802 498h3M1795 500h6M1802 500h4M1795 502h6M1802 502h6M1795 504h6M1802 504h2M1795 506h7M1792 510h3M1813 510h4M1825 510h4M1836 510h6M1849 510h5M1807 512h6M1795 524h6M1795 528h6M1802 528h4M1795 530h7M1792 534h3M1815 534h4M1795 546h6M1795 562h6M1802 562h4M1795 564h7M1792 568h3M1814 568h4M1795 580h6M1795 584h6M1802 584h4M1795 586h6M1802 586h2M1795 588h7M1792 592h3M1815 592h4M1833 592h4M1795 604h6M1795 610h6M1802 610h4M1795 612h6M1802 612h2M1795 614h7M1792 618h3M1813 618h4M1825 618h6M1795 630h6M1795 634h6M1802 634h4M1795 636h6M1802 636h2M1795 638h7M1792 642h3M1816 642h4M1828 642h6M1795 654h6M1795 658h6M1802 658h4M1795 660h6M1802 660h6M1795 662h7M1792 666h3M1817 666h4M1829 666h5M1794 676h8M1792 680h3M1801 680h3M1811 680h4M1796 684h3M1796 686h6" stroke="#7a3e9d" stroke-width="1.1" opacity="0.6"/><path d="M1800 142h6M1825 142h8M1796 154h6M1796 156h12M1804 174h10M1807 176h13M1805 178h11M1807 180h13M1807 182h13M1805 184h11M1805 186h4M1804 188h4M1807 190h13M1808 192h4M1806 194h4M1808 196h4M1806 198h4M1804 202h4M1807 204h4M1806 206h4M1798 228h10M1807 236h12M1803 240h4M1797 258h13M1796 264h13M1796 288h11M1796 312h13M1842 312h10M1796 358h13M1796 386h11M1796 420h12M1796 444h13M1796 478h11M1796 510h10M1796 534h12M1796 568h11M1796 592h12M1796 618h10M1796 642h13M1796 666h14M1796 680h4M1820 686h14M1819 690h6M1800 694h14M1823 694h13M1851 694h4M1802 700h9M1847 700h4M1796 702h18" stroke="#aa3731" stroke-width="1.1" opacity="0.6"/><path d="M1806 142h1M1808 142h1M1811 142h1M1820 142h1M1823 142h1M1833 142h1M1855 142h1M1858 142h1M1859 142h1M1863 142h1M1832 152h1M1833 152h1M1835 152h1M1837 152h1M1802 154h1M1816 154h1M1824 154h1M1825 154h1M1792 158h1M1793 158h1M1827 162h1M1816 164h1M1833 172h1M1835 172h1M1796 174h1M1802 174h1M1814 174h1M1796 176h1M1805 176h1M1820 176h1M1796 178h1M1803 178h1M1816 178h1M1796 180h1M1805 180h1M1820 180h1M1796 182h1M1805 182h1M1820 182h1M1796 184h1M1803 184h1M1816 184h1M1796 186h1M1803 186h1M1809 186h1M1796 188h1M1802 188h1M1808 188h1M1796 190h1M1805 190h1M1820 190h1M1796 192h1M1806 192h1M1812 192h1M1796 194h1M1804 194h1M1810 194h1M1796 196h1M1806 196h1M1812 196h1M1796 198h1M1804 198h1M1810 198h1M1796 202h1M1802 202h1M1808 202h1M1796 204h1M1805 204h1M1811 204h1M1796 206h1M1804 206h1M1792 208h1M1793 208h1M1796 228h1M1808 228h1M1831 228h1M1842 228h1M1844 228h1M1801 236h1M1805 236h1M1819 236h1M1833 236h1M1840 236h1M1841 236h1M1807 240h1M1792 242h1M1810 258h1M1815 258h1M1818 258h1M1820 258h1M1809 264h1M1815 264h1M1818 264h1M1819 264h1M1802 268h1M1792 270h1M1807 288h1M1818 288h1M1824 288h1M1837 288h1M1839 288h1M1804 292h1M1792 294h1M1809 312h1M1820 312h1M1826 312h1M1840 312h1M1852 312h1M1854 312h1M1804 316h1M1792 318h1M1809 358h1M1821 358h1M1827 358h1M1834 358h1M1839 358h1M1863 358h1M1877 358h1M1839 360h1M1843 360h1M1845 360h1M1804 364h1M1792 366h1M1807 386h1M1818 386h1M1824 386h1M1837 386h1M1848 386h1M1850 386h1M1804 390h1M1792 392h1M1808 420h1M1819 420h1M1825 420h1M1835 420h1M1837 420h1M1804 424h1M1792 426h1M1809 444h1M1820 444h1M1826 444h1M1852 444h1M1854 444h1M1855 444h1M1857 444h1M1796 446h1M1801 446h1M1806 446h1M1804 448h1M1792 450h1M1807 478h1M1818 478h1M1824 478h1M1836 478h1M1841 478h1M1854 478h1M1868 478h1M1829 480h1M1833 480h1M1835 480h1M1807 484h1M1792 486h1M1806 510h1M1817 510h1M1823 510h1M1829 510h1M1834 510h1M1847 510h1M1861 510h1M1828 512h1M1832 512h1M1834 512h1M1807 516h1M1792 518h1M1808 534h1M1819 534h1M1825 534h1M1827 534h1M1804 538h1M1792 540h1M1807 568h1M1818 568h1M1824 568h1M1826 568h1M1804 572h1M1792 574h1M1808 592h1M1819 592h1M1825 592h1M1837 592h1M1841 592h1M1843 592h1M1804 596h1M1792 598h1M1806 618h1M1817 618h1M1823 618h1M1846 618h1M1850 618h1M1852 618h1M1804 622h1M1792 624h1M1809 642h1M1820 642h1M1826 642h1M1849 642h1M1853 642h1M1855 642h1M1804 646h1M1792 648h1M1810 666h1M1821 666h1M1827 666h1M1841 666h1M1843 666h1M1804 670h1M1792 672h1M1800 680h1M1809 680h1M1816 680h1M1817 680h1M1822 680h1M1792 682h1M1803 684h1M1818 686h1M1834 686h1M1839 686h1M1845 686h1M1846 686h1M1809 690h1M1817 690h1M1825 690h1M1861 690h1M1862 690h1M1799 694h1M1814 694h1M1815 694h1M1820 694h1M1822 694h1M1836 694h1M1849 694h1M1855 694h1M1857 694h1M1858 694h1M1860 694h1M1862 694h1M1807 696h1M1809 696h1M1800 700h1M1811 700h1M1816 700h1M1821 700h1M1827 700h1M1832 700h1M1834 700h1M1845 700h1M1851 700h1M1852 700h1M1814 702h1M1815 702h1M1820 702h1M1821 702h1M1806 704h1M1792 706h1" stroke="#777777" stroke-width="1.1" opacity="0.6"/><path d="M1807 142h1M1810 142h1M1822 142h1M1841 142h14M1857 142h1M1812 152h8M1821 152h11M1818 154h6M1799 162h14M1814 162h13M1799 164h11M1811 164h5M1806 172h15M1822 172h10M1797 174h4M1797 176h7M1797 178h5M1797 180h7M1797 182h7M1797 184h5M1797 186h5M1797 188h4M1797 190h7M1797 192h8M1797 194h6M1797 196h5M1797 198h6M1797 202h4M1797 204h7M1797 206h6M1816 228h14M1833 228h9M1796 236h5M1802 236h2M1820 236h13M1834 236h6M1817 258h1M1810 264h5M1816 264h2M1820 288h4M1833 288h4M1822 312h4M1835 312h4M1823 358h4M1836 358h3M1857 358h6M1871 358h6M1824 360h14M1841 360h2M1820 386h4M1833 386h4M1845 386h3M1821 420h4M1831 420h4M1822 444h4M1841 444h8M1850 444h2M1802 446h4M1820 478h4M1838 478h3M1850 478h4M1862 478h6M1815 480h14M1831 480h2M1803 484h4M1819 510h4M1831 510h3M1843 510h4M1855 510h6M1814 512h14M1830 512h2M1803 516h4M1821 534h4M1820 568h4M1821 592h4M1839 592h2M1819 618h4M1832 618h14M1848 618h2M1822 642h4M1835 642h14M1851 642h2M1823 666h4M1835 666h6M1805 680h4M1818 680h4M1800 684h3M1803 686h9M1813 686h4M1835 686h4M1841 686h4M1796 690h13M1810 690h6M1816 694h4M1838 694h11M1796 700h3M1812 700h4M1817 700h4M1823 700h4M1828 700h4M1835 700h10M1816 702h4M1803 704h3" stroke="#7a3e9d" stroke-width="1.1" opacity="0.6"/><path d="M1861 142h1M1803 292h1M1803 316h1M1803 364h1M1803 390h1M1803 424h1M1853 444h1M1803 448h1M1803 538h1M1803 572h1M1803 596h1M1803 622h1M1803 646h1M1803 670h1M1861 694h1M1808 696h1" stroke="#9c5d27" stroke-width="1.1" opacity="0.6"/><path d="M1792 152h6M1799 152h5M1792 172h6M1796 240h6M1796 268h6M1808 288h5M1796 292h6M1810 312h5M1796 316h6M1810 358h5M1796 364h6M1808 386h5M1796 390h6M1809 420h5M1796 424h6M1810 444h5M1828 444h5M1796 448h6M1808 478h5M1826 478h5M1796 484h6M1807 510h5M1796 516h6M1809 534h5M1796 538h6M1808 568h5M1796 572h6M1809 592h5M1827 592h5M1796 596h6M1807 618h5M1796 622h6M1810 642h5M1796 646h6M1811 666h5M1796 670h6M1796 694h2M1800 696h6M1796 704h6" stroke="#4b69c6" stroke-width="1.1" opacity="0.6"/><path d="M1846 152h2M1849 152h24M1874 152h2M1841 162h2M1844 162h8M1853 162h2M1840 174h2M1843 174h13M1857 174h2M1838 176h2M1841 176h14M1856 176h2M1838 178h2M1841 178h13M1855 178h2M1838 180h2M1841 180h32M1874 180h2M1838 182h2M1841 182h11M1853 182h2M1838 184h2M1841 184h19M1861 184h2M1835 186h2M1838 186h8M1847 186h2M1834 188h2M1837 188h6M1844 188h2M1838 190h2M1841 190h29M1871 190h2M1834 192h2M1837 192h12M1850 192h2M1836 194h2M1839 194h8M1848 194h2M1838 196h2M1841 196h10M1852 196h2M1855 196h2M1858 196h2M1836 198h2M1839 198h10M1850 198h2M1796 230h2M1799 230h5M1805 230h14M1820 230h2M1796 234h2M1799 234h24M1824 234h2M1796 260h2M1799 260h5M1805 260h14M1820 260h2M1796 290h2M1799 290h5M1805 290h18M1824 290h2M1796 314h2M1799 314h5M1805 314h84M1890 314h2M1796 362h2M1799 362h5M1805 362h92M1796 388h2M1799 388h5M1805 388h26M1832 388h2M1796 422h2M1799 422h5M1805 422h22M1828 422h2M1796 482h2M1799 482h4M1804 482h2M1796 514h2M1799 514h4M1804 514h2M1796 536h2M1799 536h4M1804 536h2M1796 570h2M1799 570h4M1804 570h2M1796 594h2M1799 594h4M1804 594h2M1796 620h2M1799 620h4M1804 620h2M1796 644h2M1799 644h4M1804 644h2M1796 668h2M1799 668h4M1804 668h2" stroke="#aaaaaa" stroke-width="1.1" opacity="0.6"/></svg>
<div class="a" style="left:0;top:998px;width:1920px;height:32px;background:#705697"></div>
<div class="a" style="left:0;top:998px;width:241px;height:32px;background:#4e3c69"></div>
<svg class="a" style="left:17px;top:1004px" width="18" height="22" fill="none" stroke="#fff" stroke-width="1.6"><path d="M2.3 7.1 L8.3 12.5 L2.3 18.4 M14.7 1.5 L8.6 7.2 L14.7 12.9"/></svg>
<span class="t" style="left:41px;top:1006.93px;font-size:17.8px;font-weight:normal;color:#fff;transform:scaleX(0.8876);transform-origin:0 0;">SSH: HITSZ-OS-SERVER</span>
<svg class="a" style="left:254px;top:1003px" width="20" height="22" fill="none" stroke="#fff" stroke-width="1.5"><circle cx="4.5" cy="4.5" r="2.8"/><circle cx="4.5" cy="18" r="2.8"/><circle cx="15" cy="7" r="2.8"/><path d="M4.5 7.3 V15.2 M15 9.8 Q15 14 7 15.5"/></svg>
<span class="t" style="left:279px;top:1006.93px;font-size:17.8px;font-weight:normal;color:#fff;transform:scaleX(1.0337);transform-origin:0 0;">main*</span>
<svg class="a" style="left:0;top:990px" width="400" height="40" fill="none" stroke="#fff" stroke-width="1.5" stroke-linejoin="round"><path d="M352.6 23.6 A8 8 0 0 1 368.3 22.2 M365.6 20.8 L368.4 24.6 L371.2 20.8 M368.4 25.2 A8 8 0 0 1 352.7 26.6 M349.8 28 L352.6 24.2 L355.4 28"/></svg>
<svg class="a" style="left:395px;top:1004px" width="20" height="20" fill="none" stroke="#fff" stroke-width="1.5"><circle cx="10" cy="10" r="8.5"/><path d="M6.5 6.5 L13.5 13.5 M13.5 6.5 L6.5 13.5"/></svg>
<span class="t" style="left:420.5px;top:1006.93px;font-size:17.8px;font-weight:normal;color:#fff;transform:scaleX(1.0000);transform-origin:0 0;">2</span>
<svg class="a" style="left:435px;top:1004px" width="22" height="20" fill="none" stroke="#fff" stroke-width="1.5"><path d="M11 1.5 L20.5 18.5 H1.5 Z"/><path d="M11 7 V12.5 M11 14.5 V16"/></svg>
<span class="t" style="left:460.5px;top:1006.93px;font-size:17.8px;font-weight:normal;color:#fff;transform:scaleX(1.0000);transform-origin:0 0;">0</span>
<svg class="a" style="left:496px;top:1004px" width="20" height="21" fill="none" stroke="#fff" stroke-width="1.4"><path d="M4 2 Q0 8 4 14 M16 2 Q20 8 16 14 M7 5 Q5.5 8 7 11 M13 5 Q14.5 8 13 11"/><circle cx="10" cy="8" r="1.5"/><path d="M10 9.5 L6.5 20 M10 9.5 L13.5 20 M7.5 16.5 H12.5"/></svg>
<span class="t" style="left:520.5px;top:1006.93px;font-size:17.8px;font-weight:normal;color:#fff;transform:scaleX(1.0000);transform-origin:0 0;">0</span>
<svg class="a" style="left:553px;top:1004px" width="24" height="22" fill="none" stroke="#fff" stroke-width="1.4"><path d="M9 1.5 V8 M9 1.5 L22 10 L14 15"/><ellipse cx="7.5" cy="15" rx="3.8" ry="4.5"/><path d="M3.5 13.5 H11.5 M1.5 15 H3.5 M11.5 15 H13.5 M2 10.5 L4 12 M13 10.5 L11 12 M2 20 L4 18 M13 20 L11 18"/></svg>
<span class="t" style="left:581px;top:1006.93px;font-size:17.8px;font-weight:normal;color:#fff;transform:scaleX(1.0000);transform-origin:0 0;">gcc - 生成和调试活动文件 (newfs)</span>
<span class="t" style="left:1357.5px;top:1006.93px;font-size:17.8px;font-weight:normal;color:#fff;transform:scaleX(0.9944);transform-origin:0 0;">行 288，列 2</span>
<span class="t" style="left:1484px;top:1006.93px;font-size:17.8px;font-weight:normal;color:#fff;transform:scaleX(0.9972);transform-origin:0 0;">制表符长度: 4</span>
<span class="t" style="left:1616.5px;top:1006.93px;font-size:17.8px;font-weight:normal;color:#fff;transform:scaleX(0.9438);transform-origin:0 0;">UTF-8</span>
<span class="t" style="left:1689px;top:1006.93px;font-size:17.8px;font-weight:normal;color:#fff;transform:scaleX(0.8146);transform-origin:0 0;">LF</span>
<span class="t" style="left:1729px;top:1006.93px;font-size:17.8px;font-weight:normal;color:#fff;transform:scaleX(0.9270);transform-origin:0 0;">C</span>
<span class="t" style="left:1765px;top:1006.93px;font-size:17.8px;font-weight:normal;color:#fff;transform:scaleX(0.9635);transform-origin:0 0;">Linux</span>
<svg class="a" style="left:1826px;top:1000px" width="28" height="28" fill="none" stroke="#fff" stroke-width="1.5"><circle cx="11.6" cy="13.7" r="3.4"/><path d="M5.6 23.8 A6 5.8 0 0 1 17.6 23.8"/><path d="M9.7 9.6 V5.5 H23.8 V14.6 H19.6 L17.2 17.6 V14.9"/></svg>
<svg class="a" style="left:1870px;top:1000px" width="28" height="28" fill="none" stroke="#fff" stroke-width="1.5" stroke-linejoin="round"><path d="M10.2 18 V11 A5.9 6 0 0 1 22 11 V18 L23.6 19.8 H8.6 L10.2 18 Z"/><path d="M13.9 20.3 A2.2 2.2 0 0 0 18.3 20.3"/></svg>
<div class="a" style="left:1918px;top:0;width:2px;height:1030px;background:#000"></div>
</body></html>
